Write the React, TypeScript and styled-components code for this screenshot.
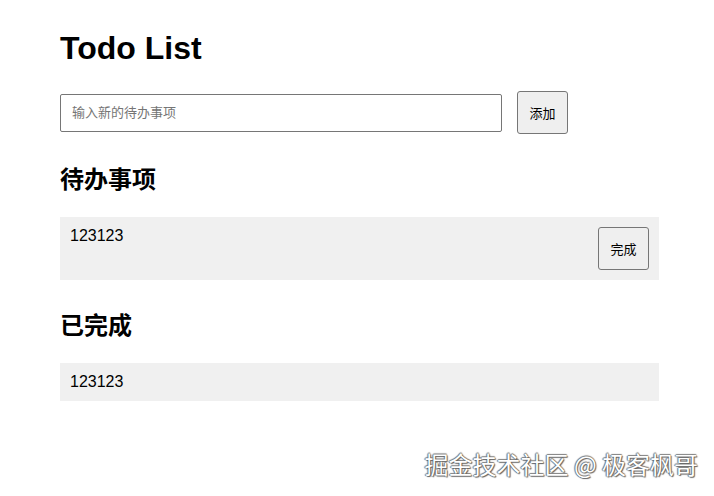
import React, { useState } from 'react'
import styled, { createGlobalStyle } from 'styled-components'

type Todo = { id: number; text: string; done: boolean }

const initialTodos: Todo[] = [
  { id: 1, text: '123123', done: false },
  { id: 2, text: '123123', done: true },
]

const App = () => {
  const [todos, setTodos] = useState<Todo[]>(initialTodos)
  const [draft, setDraft] = useState('')

  const add = () => {
    if (!draft.trim()) return
    setTodos([...todos, { id: Date.now(), text: draft, done: false }])
    setDraft('')
  }

  const finish = (id: number) =>
    setTodos(todos.map((t) => (t.id === id ? { ...t, done: true } : t)))

  const pending = todos.filter((t) => !t.done)
  const done = todos.filter((t) => t.done)

  return (
    <>
      <GlobalStyle />
      <Page>
        <Title>Todo List</Title>
        <AddRow>
          <Input
            placeholder="输入新的待办事项"
            value={draft}
            onChange={(e) => setDraft(e.target.value)}
          />
          <Button onClick={add}>添加</Button>
        </AddRow>

        <Section>
          <Heading>待办事项</Heading>
          <List>
            {pending.map((t) => (
              <Item key={t.id}>
                <ItemText>{t.text}</ItemText>
                <Button onClick={() => finish(t.id)}>完成</Button>
              </Item>
            ))}
          </List>
        </Section>

        <Section>
          <Heading>已完成</Heading>
          <List>
            {done.map((t) => (
              <Item key={t.id}>
                <ItemText>{t.text}</ItemText>
              </Item>
            ))}
          </List>
        </Section>
      </Page>
      <Watermark>掘金技术社区 @ 极客枫哥</Watermark>
    </>
  )
}

const GlobalStyle = createGlobalStyle`
  html, body {
    margin: 0;
    padding: 0;
    background: #ffffff;
  }
  body {
    font-family: 'Liberation Sans', Arial, 'Noto Sans CJK SC', sans-serif;
    color: #000000;
  }
`

const Page = styled.div`
  width: 599px;
  padding: 30px 0 0 60px;
  display: flex;
  flex-direction: column;
`

const Title = styled.h1`
  margin: 0;
  font-size: 32px;
  font-weight: 700;
  line-height: 37px;
`

const AddRow = styled.div`
  display: flex;
  align-items: center;
  gap: 15px;
  margin-top: 24px;
`

const Input = styled.input`
  width: 442px;
  height: 38px;
  box-sizing: border-box;
  padding: 0 11px;
  border: 1px solid #767676;
  border-radius: 2px;
  font-family: 'Liberation Sans', Arial, 'Noto Sans CJK SC', sans-serif;
  font-size: 13px;
  outline: none;
  &::placeholder {
    color: #757575;
  }
`

const Button = styled.button`
  width: 51px;
  height: 43px;
  flex-shrink: 0;
  padding: 0;
  border: 1px solid #767676;
  border-radius: 3px;
  background: #efefef;
  color: #000000;
  font-family: 'Liberation Sans', Arial, 'Noto Sans CJK SC', sans-serif;
  font-size: 13px;
  cursor: pointer;
`

const Section = styled.section`
  display: flex;
  flex-direction: column;
  margin-top: 32px;
`

const Heading = styled.h2`
  margin: 0;
  font-size: 24px;
  font-weight: 700;
  line-height: 28px;
  font-family: 'Liberation Sans', Arial, 'Noto Sans CJK SC', sans-serif;
`

const List = styled.ul`
  list-style: none;
  margin: 23px 0 0;
  padding: 0;
`

const Item = styled.li`
  display: flex;
  justify-content: space-between;
  align-items: flex-start;
  padding: 10px;
  background: #f0f0f0;
`

const ItemText = styled.span`
  font-size: 16px;
  line-height: 18px;
`

const Watermark = styled.div`
  position: absolute;
  right: 16px;
  top: 447px;
  font-family: 'Noto Sans CJK SC', sans-serif;
  font-size: 24px;
  line-height: 34px;
  color: #ffffff;
  text-shadow: 0 0 1px #444, 1px 1px 1px #666, -1px 0 1px #888, 0 -1px 1px #888;
  pointer-events: none;
`

export default App
